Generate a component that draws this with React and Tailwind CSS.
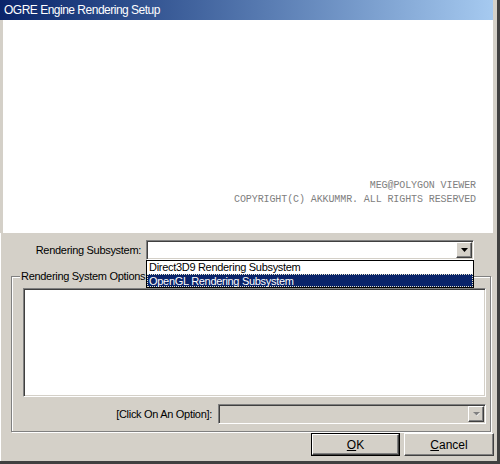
import React from "react";

// classic win32 bevels
const sunken =
  "border border-t-[#808080] border-l-[#808080] border-b-white border-r-white shadow-[inset_1px_1px_0_#404040,inset_-1px_-1px_0_#d4d0c8]";
const raised =
  "border border-t-white border-l-white border-b-[#404040] border-r-[#404040] shadow-[inset_-1px_-1px_0_#808080]";

function ArrowButton({ disabled }) {
  return (
    <div className={`w-[16px] h-[16px] bg-[#d4d0c8] flex items-center justify-center ${raised}`}>
      {disabled ? (
        <svg width="7" height="5" viewBox="0 0 7 5">
          <path d="M1 1h6L4 4z" fill="#ffffff" />
          <path d="M0 0h7L3.5 3.5z" fill="#808080" />
        </svg>
      ) : (
        <svg width="7" height="4" viewBox="0 0 7 4">
          <path d="M0 0h7L3.5 4z" fill="#000000" />
        </svg>
      )}
    </div>
  );
}

export default function App() {
  return (
    <div className="relative w-[500px] h-[464px] bg-[#d4d0c8] border-r-[3px] border-b-[3px] border-[#404040] pr-[3px] flex flex-col font-['Liberation_Sans',Arial,sans-serif] text-[11px] tracking-[-0.3px] text-black overflow-hidden">
      {/* Title bar */}
      <div className="h-[20px] w-[493px] shrink-0 bg-gradient-to-r from-[#0a246a] to-[#a6caf0] flex items-center pl-[4px]">
        <span className="text-white text-[12px] tracking-[-0.5px]">OGRE Engine Rendering Setup</span>
      </div>

      {/* Banner */}
      <div className="h-[213px] shrink-0 ml-[3px] w-[490px] bg-white flex flex-col items-end justify-end pr-[17px] pb-[26px] font-['Liberation_Mono',monospace] text-[10px] leading-[14px] text-[#808080] tracking-[-0.1px]">
        <div>MEG@POLYGON VIEWER</div>
        <div>COPYRIGHT(C) AKKUMMR. ALL RIGHTS RESERVED</div>
      </div>

      {/* Controls */}
      <div className="flex-1 flex flex-col pt-[7px] shadow-[inset_1px_0_0_white]">
        <div className="flex items-center h-[20px]">
          <div className="w-[141px] text-right">Rendering Subsystem:</div>
          <div className={`ml-[5px] w-[328px] h-[20px] bg-white flex items-center justify-end pr-[1px] ${sunken}`}>
            <ArrowButton />
          </div>
        </div>

        <div className="relative mt-[16px] ml-[11px] w-[480px] h-[156px] border border-[#808080] shadow-[1px_1px_0_white,inset_1px_1px_0_white] pl-[11px] pt-[11px]">
          <div className="absolute left-[8px] top-[-8px] bg-[#d4d0c8] px-[1px] leading-[14px]">
            Rendering System Options
          </div>
          <div className={`w-[463px] h-[109px] bg-white ${sunken}`} />
          <div className="w-[463px] mt-[7px] flex items-center justify-end gap-[6px]">
            <div>[Click On An Option]:</div>
            <div className={`w-[268px] h-[20px] bg-[#d4d0c8] flex items-center justify-end pr-[1px] ${sunken}`}>
              <ArrowButton disabled />
            </div>
          </div>
        </div>

        <div className="mt-[1px] flex justify-end gap-[4px] text-[12px] tracking-normal">
          <button className="w-[89px] h-[23px] border border-black bg-[#d4d0c8]">
            <div className={`w-full h-full flex items-center justify-center ${raised}`}>
              <span><span className="underline">O</span>K</span>
            </div>
          </button>
          <button className={`w-[90px] h-[23px] bg-[#d4d0c8] flex items-center justify-center ${raised}`}>
            <span><span className="underline">C</span>ancel</span>
          </button>
        </div>
      </div>

      {/* open dropdown list */}
      <div className="absolute left-[146px] top-[260px] w-[328px] border border-black bg-white text-[11px] leading-[12px]">
        <div className="h-[13px] pl-[2px]">Direct3D9 Rendering Subsystem</div>
        <div className="h-[13px] pl-[1px] bg-[#0a246a] text-white border border-dotted border-[#e8e4c8]">
          OpenGL Rendering Subsystem
        </div>
      </div>
    </div>
  );
}
